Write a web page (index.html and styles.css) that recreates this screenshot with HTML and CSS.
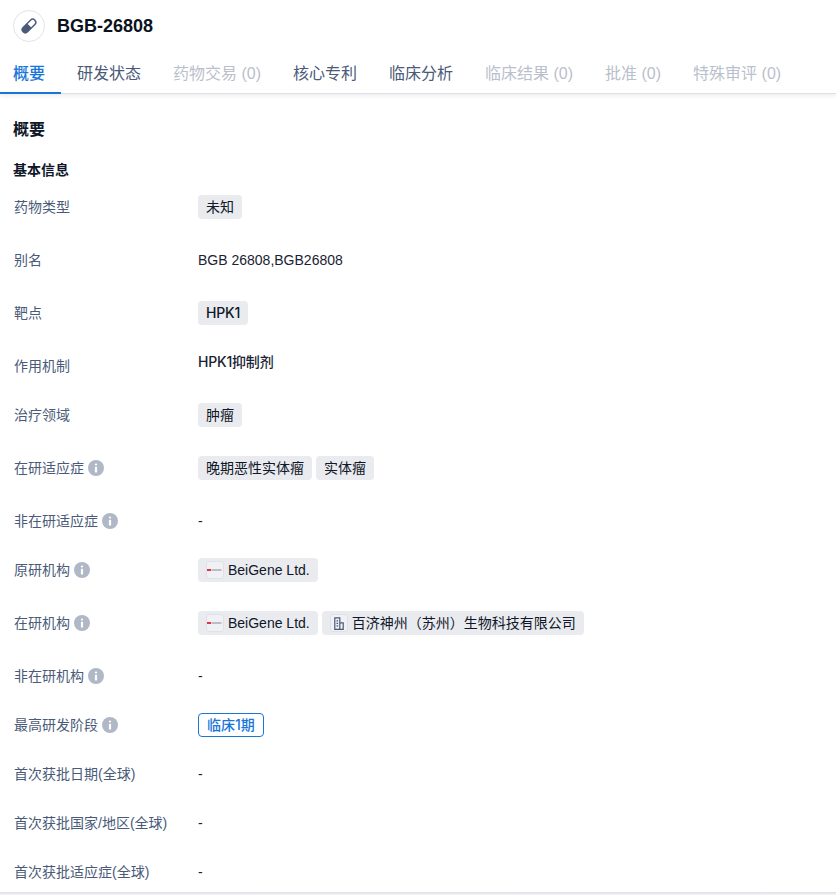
FILE: index.html
```html
<!DOCTYPE html>
<html lang="zh">
<head>
<meta charset="utf-8">
<title>BGB-26808</title>
<link rel="stylesheet" href="styles.css">
</head>
<body>
<header class="head">
  <div class="title-row">
    <span class="drug-icon">
      <svg width="20" height="20" viewBox="0 0 20 20"><g transform="rotate(-45 10 10)"><rect x="1" y="6.200" width="18" height="7.600" rx="3.800" fill="#4a5a78"/><path d="M10.500 7.600h4.700a2.400 2.400 0 0 1 0 4.800h-4.700z" fill="#fff"/></g></svg>
    </span>
    <h1 class="title">BGB-26808</h1>
  </div>
  <nav class="tabs">
    <span class="tab active">概要</span>
    <span class="tab">研发状态</span>
    <span class="tab off">药物交易 (0)</span>
    <span class="tab">核心专利</span>
    <span class="tab">临床分析</span>
    <span class="tab off">临床结果 (0)</span>
    <span class="tab off">批准 (0)</span>
    <span class="tab off">特殊审评 (0)</span>
  </nav>
</header>
<main class="main">
  <h2 class="sec">概要</h2>
  <h3 class="sub">基本信息</h3>
  <div class="rows">
    <div class="row tall"><div class="label">药物类型</div><div class="value"><span class="tag">未知</span></div></div>
    <div class="row tall"><div class="label">别名</div><div class="value">BGB 26808,BGB26808</div></div>
    <div class="row"><div class="label">靶点</div><div class="value"><span class="tag medium">HPK1</span></div></div>
    <div class="row tall"><div class="label drop">作用机制</div><div class="value medium">HPK1抑制剂</div></div>
    <div class="row tall"><div class="label">治疗领域</div><div class="value"><span class="tag">肿瘤</span></div></div>
    <div class="row tall"><div class="label">在研适应症<svg class="info" viewBox="0 0 16 16"><use href="#i"/></svg></div><div class="value"><span class="tag">晚期恶性实体瘤</span><span class="tag">实体瘤</span></div></div>
    <div class="row"><div class="label">非在研适应症<svg class="info" viewBox="0 0 16 16"><use href="#i"/></svg></div><div class="value">-</div></div>
    <div class="row tall"><div class="label">原研机构<svg class="info" viewBox="0 0 16 16"><use href="#i"/></svg></div><div class="value"><span class="tag org"><span class="logo"><svg width="16" height="4" viewBox="0 0 16 4"><rect y="1" width="4" height="2" fill="#e8323c"/><rect x="4.500" y="1.300" width="10" height="1.400" fill="#a5a5ad"/></svg></span>BeiGene Ltd.</span></div></div>
    <div class="row tall"><div class="label">在研机构<svg class="info" viewBox="0 0 16 16"><use href="#i"/></svg></div><div class="value"><span class="tag org"><span class="logo"><svg width="16" height="4" viewBox="0 0 16 4"><rect y="1" width="4" height="2" fill="#e8323c"/><rect x="4.500" y="1.300" width="10" height="1.400" fill="#a5a5ad"/></svg></span>BeiGene Ltd.</span><span class="tag org"><span class="logo"><svg width="10" height="13" viewBox="0 0 10 13" fill="none" stroke="#4a5a78" stroke-width="1.200"><path d="M.8 12.300V.8h5v11.500zM5.800 5.800h3.400v6.500H5.800M2.500 3.800h1.600M2.500 6.300h1.600M2.500 8.800h1.600"/></svg></span>百济神州（苏州）生物科技有限公司</span></div></div>
    <div class="row"><div class="label">非在研机构<svg class="info" viewBox="0 0 16 16"><use href="#i"/></svg></div><div class="value">-</div></div>
    <div class="row"><div class="label">最高研发阶段<svg class="info" viewBox="0 0 16 16"><use href="#i"/></svg></div><div class="value"><span class="stage">临床1期</span></div></div>
    <div class="row"><div class="label">首次获批日期(全球)</div><div class="value">-</div></div>
    <div class="row"><div class="label">首次获批国家/地区(全球)</div><div class="value">-</div></div>
    <div class="row last"><div class="label">首次获批适应症(全球)</div><div class="value">-</div></div>
  </div>
</main>
<svg class="defs" width="0" height="0"><symbol id="i" viewBox="0 0 16 16"><circle cx="8" cy="8" r="8" fill="#b0b7c6"/><rect x="6.900" y="3.400" width="2.200" height="2.200" rx="1" fill="#fff"/><rect x="6.900" y="6.800" width="2.200" height="5.800" rx=".6" fill="#fff"/></symbol></svg>
</body>
</html>
```
FILE: styles.css
```css
* { box-sizing: border-box; }
html, body { margin: 0; padding: 0; }
body {
  width: 836px;
  height: 895px;
  overflow: hidden;
  background: #fff;
  font-family: "Liberation Sans", "Noto Sans CJK SC", sans-serif;
  font-size: 14px;
  color: #0f1729;
}
.head {
  height: 94px;
  border-bottom: 1px solid #dfe1e6;
  box-shadow: 0 2px 4px rgba(20, 30, 50, .08);
}
.title-row {
  display: flex;
  align-items: center;
  height: 52px;
  padding-left: 13px;
  gap: 12px;
}
.drug-icon {
  width: 32px;
  height: 32px;
  border: 1px solid #e1e3e9;
  border-radius: 50%;
  display: flex;
  align-items: center;
  justify-content: center;
}
.title {
  margin: 0;
  font-size: 18px;
  font-weight: 700;
  line-height: 24px;
  color: #0b1220;
}
.tabs { display: flex; height: 42px; }
.tab {
  padding: 0 16px;
  height: 42px;
  line-height: 43px;
  font-size: 16px;
  color: #4a5a78;
  white-space: nowrap;
}
.tab.active {
  padding-left: 13px;
  color: #1976d9;
  font-weight: 500;
  border-bottom: 2px solid #1976d9;
}
.tab.off { color: #b9bfcc; }
.main { padding: 0 13px; }
.sec {
  margin: 0;
  padding-top: 25px;
  font-size: 16px;
  line-height: 22px;
  font-weight: 700;
}
.sub {
  margin: 0;
  padding-top: 19px;
  font-size: 14px;
  line-height: 20px;
  font-weight: 700;
  height: 44px;
}
.rows { display: flex; flex-direction: column; padding-top: 10px; }
.row { display: flex; align-items: flex-start; height: 49px; }
.row.tall { height: 53px; }
.label {
  width: 185px;
  padding-left: 1px;
  flex: none;
  display: flex;
  align-items: center;
  gap: 4px;
  line-height: 24px;
  color: #4a5a78;
}
.label.drop { padding-top: 4px; }
.info { width: 16px; height: 16px; flex: none; }
.value { display: flex; gap: 4px; line-height: 24px; color: #1a2233; }
.medium {
  font-family: Inter, "Noto Sans CJK SC", sans-serif;
  font-weight: 500;
  letter-spacing: -.2px;
}
.tag {
  height: 24px;
  padding: 0 8px;
  background: #eaebef;
  border-radius: 4px;
  line-height: 24px;
  color: #0f1729;
  white-space: nowrap;
  display: inline-flex;
  align-items: center;
}
.tag.org { gap: 4px; }
.logo {
  width: 18px;
  height: 18px;
  background: #f0f1f4;
  border: 1px solid #dfe1e6;
  border-radius: 3px;
  display: inline-flex;
  align-items: center;
  justify-content: center;
  overflow: hidden;
  flex: none;
}
.stage {
  height: 24px;
  padding: 0 8px;
  border: 1px solid #1976d9;
  border-radius: 4px;
  line-height: 22px;
  color: #1976d9;
  font-family: Inter, "Noto Sans CJK SC", sans-serif;
  font-weight: 500;
  white-space: nowrap;
}
.defs { position: absolute; }
body::after {
  content: "";
  position: absolute;
  left: 0;
  top: 892px;
  width: 836px;
  height: 3px;
  background: linear-gradient(#dcdee3, #f4f5f7);
}
```
